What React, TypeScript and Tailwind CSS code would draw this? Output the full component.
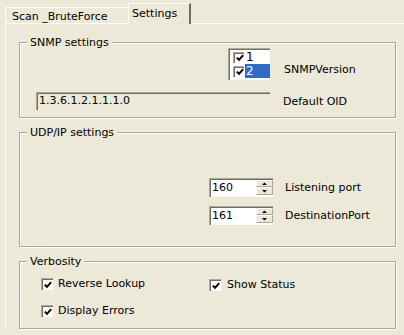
import React from 'react';

function Check({ size = 12 }: { size?: number }) {
  return (
    <span
      className="inline-flex shrink-0 border-t border-l border-[#ACA899] border-b-white border-r-white"
      style={{ width: size, height: size }}
    >
      <span className="flex flex-1 items-center justify-center border-t border-l border-[#716F64] border-b-[#F1EFE2] border-r-[#F1EFE2] bg-white">
        <svg width="8" height="8" viewBox="0 0 8 8">
          <path d="M0.8 3.6 L3 5.8 L7.2 1.2" fill="none" stroke="#000" strokeWidth="2" />
        </svg>
      </span>
    </span>
  );
}

function Sunken({ className, inner, children }: { className?: string; inner?: string; children?: React.ReactNode }) {
  return (
    <div className={`flex border-t border-l border-[#ACA899] border-b-white border-r-white ${className ?? ''}`}>
      <div className={`flex flex-1 border-t border-l border-[#716F64] border-b-[#F1EFE2] border-r-[#F1EFE2] ${inner ?? ''}`}>
        {children}
      </div>
    </div>
  );
}

function Group({ title, className, children }: { title: string; className?: string; children?: React.ReactNode }) {
  return (
    <div className={`relative w-[377px] border border-[#ACA899] shadow-[inset_1px_1px_0_#fff,1px_1px_0_#fff] ${className ?? ''}`}>
      <span className="absolute left-[7px] top-[-7px] bg-[#ECE9D8] px-[3px]">{title}</span>
      {children}
    </div>
  );
}

function Spin({ value }: { value: string }) {
  return (
    <Sunken className="h-[19px] w-[64px]" inner="bg-white">
      <span className="flex-1 pl-[1px] leading-[15px]">{value}</span>
      <div className="flex w-[17px] flex-col">
        <div className="flex h-[7px] items-center justify-center border-t border-l border-white border-b border-r border-b-[#ACA899] border-r-[#ACA899] bg-[#ECE9D8]">
          <svg width="5" height="3" viewBox="0 0 5 3">
            <path d="M0 3 L2.5 0.5 L5 3 Z" fill="#000" />
          </svg>
        </div>
        <div className="flex h-[8px] items-center justify-center border-t border-l border-white border-b border-r border-b-[#ACA899] border-r-[#ACA899] bg-[#ECE9D8]">
          <svg width="5" height="3" viewBox="0 0 5 3">
            <path d="M0 0 L2.5 2.5 L5 0 Z" fill="#000" />
          </svg>
        </div>
      </div>
    </Sunken>
  );
}

export default function App() {
  return (
    <div className="h-[335px] w-[404px] overflow-hidden bg-[#ECE9D8] font-['DejaVu_Sans',sans-serif] text-[11px] leading-[13px] text-black">
      {/* tabs */}
      <div className="flex h-[23px] items-end pl-[5px]">
        <div className="h-[16px] w-[123px] rounded-tl-[2px] border-t border-l border-white pl-[6px] pt-[2px]">
          Scan _BruteForce
        </div>
        <div className="relative z-10 -mb-px h-[21px] w-[63px] border-t border-l border-white border-r-2 border-r-[#716F64] bg-[#ECE9D8] pl-[3px] pt-[3px]">
          Settings
        </div>
      </div>

      {/* pane */}
      <div className="ml-[5px] border-t border-l border-white pl-[13px] pt-[18px]">
        <Group title="SNMP settings" className="h-[76px] pl-[16px] pt-[5px]">
          <div className="flex items-end">
            <div className="flex w-[234px] justify-end">
              <Sunken className="h-[32px] w-[42px]" inner="flex-col bg-white">
                <div className="flex h-[14px] items-center pl-[3px]">
                  <Check size={11} />
                  <span className="ml-[1px] flex-1 pl-[1px] text-[12px] leading-[14px]">1</span>
                </div>
                <div className="flex h-[14px] items-center pl-[3px]">
                  <Check size={11} />
                  <span className="ml-[1px] flex-1 bg-[#316AC5] pl-[1px] text-[12px] leading-[14px] text-white">2</span>
                </div>
              </Sunken>
            </div>
            <span className="mb-[4px] ml-[14px]">SNMPVersion</span>
          </div>
          <div className="mt-[12px] flex items-center">
            <Sunken className="h-[18px] w-[234px]" inner="bg-[#ECE9D8]">
              <span className="pl-[1px] leading-[14px]">1.3.6.1.2.1.1.1.0</span>
            </Sunken>
            <span className="ml-[13px]">Default OID</span>
          </div>
        </Group>

        <Group title="UDP/IP settings" className="mt-[14px] h-[115px] pl-[189px] pt-[45px]">
          <div className="flex items-center">
            <Spin value="160" />
            <span className="ml-[12px]">Listening port</span>
          </div>
          <div className="mt-[9px] flex items-center">
            <Spin value="161" />
            <span className="ml-[12px]">DestinationPort</span>
          </div>
        </Group>

        <Group title="Verbosity" className="mt-[14px] h-[68px] pl-[21px] pt-[14px]">
          <div className="grid grid-cols-[168px_auto] gap-y-[13px]">
            <label className="flex items-center gap-[5px]">
              <Check />
              <span>Reverse Lookup</span>
            </label>
            <label className="mt-[2px] flex items-center gap-[6px]">
              <Check />
              <span>Show Status</span>
            </label>
            <label className="flex items-center gap-[5px]">
              <Check />
              <span>Display Errors</span>
            </label>
          </div>
        </Group>
      </div>
    </div>
  );
}
